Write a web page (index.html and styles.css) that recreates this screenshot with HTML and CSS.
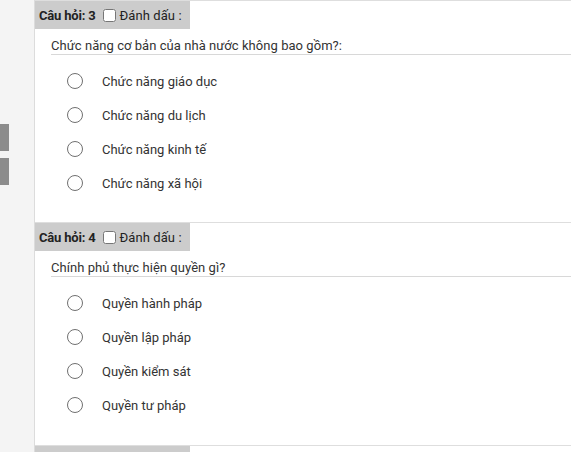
FILE: index.html
```html
<!DOCTYPE html>
<html lang="vi">
<head>
<meta charset="utf-8">
<link rel="stylesheet" href="styles.css">
</head>
<body>
<div class="page">
  <aside class="side">
    <div class="tab"></div>
    <div class="tab"></div>
  </aside>
  <main class="main">
    <section class="q">
      <div class="qhead"><b>Câu hỏi: 3</b><input type="checkbox" class="mark"><span>Đánh dấu :</span></div>
      <div class="qtext">Chức năng cơ bản của nhà nước không bao gồm?:</div>
      <ul class="opts">
        <li><span class="radio"></span>Chức năng giáo dục</li>
        <li><span class="radio"></span>Chức năng du lịch</li>
        <li><span class="radio"></span>Chức năng kinh tế</li>
        <li><span class="radio"></span>Chức năng xã hội</li>
      </ul>
    </section>
    <section class="q">
      <div class="qhead"><b>Câu hỏi: 4</b><input type="checkbox" class="mark"><span>Đánh dấu :</span></div>
      <div class="qtext">Chính phủ thực hiện quyền gì?</div>
      <ul class="opts">
        <li><span class="radio"></span>Quyền hành pháp</li>
        <li><span class="radio"></span>Quyền lập pháp</li>
        <li><span class="radio"></span>Quyền kiểm sát</li>
        <li><span class="radio"></span>Quyền tư pháp</li>
      </ul>
    </section>
    <section class="q q-last">
      <div class="qhead"><b>Câu hỏi: 5</b><input type="checkbox" class="mark"><span>Đánh dấu :</span></div>
    </section>
  </main>
</div>
</body>
</html>
```
FILE: styles.css
```css
html, body {
  margin: 0;
  padding: 0;
  background: #fff;
  height: 100%;
  overflow: hidden;
}
body {
  font-family: Roboto, "Noto Sans", Arial, sans-serif;
  font-size: 13px;
  color: #333;
}
.page {
  display: flex;
  min-height: 452px;
}
.side {
  width: 35px;
  flex: none;
  background: #f4f4f4;
  border-right: 1px solid #dcdcdc;
  display: flex;
  flex-direction: column;
  gap: 7px;
  padding-top: 124px;
  box-sizing: border-box;
}
.tab {
  width: 9px;
  height: 27px;
  background: #8c8c8c;
}
.main {
  flex: 1;
  min-width: 0;
}
.q {
  border-top: 1px solid #dedede;
  padding-bottom: 22px;
}
.q-last {
  margin-top: 1px;
}
.qhead {
  display: inline-flex;
  align-items: center;
  height: 28px;
  width: 155px;
  box-sizing: border-box;
  padding-left: 4px;
  background: #cccccc;
  color: #222;
}
.qhead b {
  font-weight: 700;
  letter-spacing: -0.2px;
}
.mark {
  width: 13px;
  height: 13px;
  margin: 0 3px 0 8px;
}
.qhead span {
  letter-spacing: 0.1px;
}
.qtext {
  margin: 8px 0 0 16px;
  line-height: 17px;
  border-bottom: 1px solid #d8d8d8;
  color: #333;
  letter-spacing: 0.05px;
}
.opts {
  list-style: none;
  margin: 0;
  padding: 9px 0 0 32px;
}
.opts li {
  display: flex;
  align-items: center;
  height: 34px;
  color: #333;
}
.radio {
  width: 14px;
  height: 14px;
  border: 1px solid #707070;
  border-radius: 50%;
  margin-right: 19px;
  flex: none;
}
```
